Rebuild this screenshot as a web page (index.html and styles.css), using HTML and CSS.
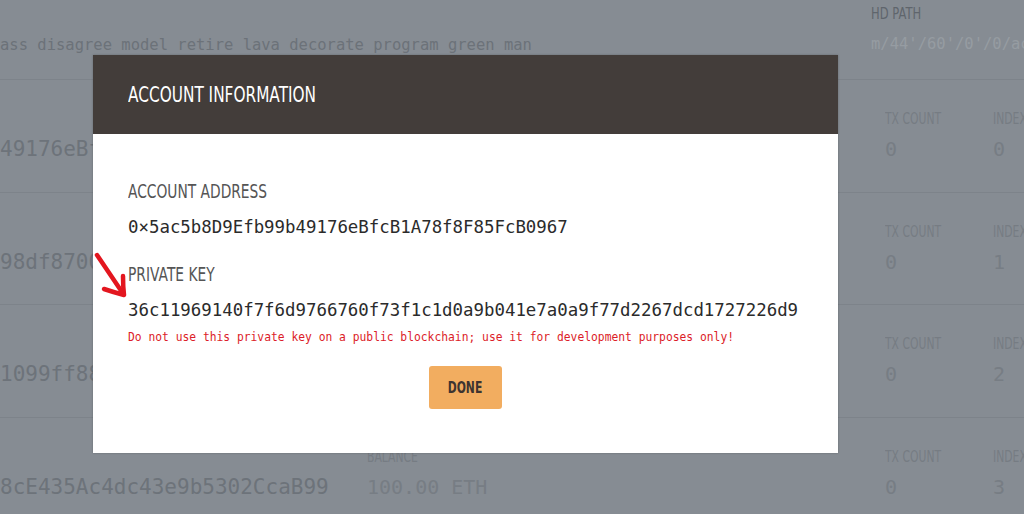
FILE: index.html
```html
<!DOCTYPE html>
<html>
<head>
<meta charset="utf-8">
<link rel="stylesheet" href="styles.css">
</head>
<body>
<div class="page">
  <header class="top">
    <div class="mnemonic">ass disagree model retire lava decorate program green man</div>
    <div class="hd">
      <div class="label"><span class="cond">HD PATH</span></div>
      <div class="hd-value">m/44'/60'/0'/0/account_index</div>
    </div>
  </header>
  <div class="row">
    <div class="addr">49176eBfcB1A78f8F85FcB0967</div>
    <div class="cell"><div class="label"><span class="cond">BALANCE</span></div><div class="value">100.00 ETH</div></div>
    <div class="cell"><div class="label"><span class="cond">TX COUNT</span></div><div class="value">0</div></div>
    <div class="cell"><div class="label"><span class="cond">INDEX</span></div><div class="value">0</div></div>
  </div>
  <div class="row">
    <div class="addr">98df8700Ba31C0a6E2d5fA91</div>
    <div class="cell"><div class="label"><span class="cond">BALANCE</span></div><div class="value">100.00 ETH</div></div>
    <div class="cell"><div class="label"><span class="cond">TX COUNT</span></div><div class="value">0</div></div>
    <div class="cell"><div class="label"><span class="cond">INDEX</span></div><div class="value">1</div></div>
  </div>
  <div class="row">
    <div class="addr">1099ff88E2aB7c4D031f6e29</div>
    <div class="cell"><div class="label"><span class="cond">BALANCE</span></div><div class="value">100.00 ETH</div></div>
    <div class="cell"><div class="label"><span class="cond">TX COUNT</span></div><div class="value">0</div></div>
    <div class="cell"><div class="label"><span class="cond">INDEX</span></div><div class="value">2</div></div>
  </div>
  <div class="row">
    <div class="addr">8cE435Ac4dc43e9b5302CcaB99</div>
    <div class="cell"><div class="label"><span class="cond">BALANCE</span></div><div class="value">100.00 ETH</div></div>
    <div class="cell"><div class="label"><span class="cond">TX COUNT</span></div><div class="value">0</div></div>
    <div class="cell"><div class="label"><span class="cond">INDEX</span></div><div class="value">3</div></div>
  </div>
</div>

<div class="modal">
  <div class="modal-head"><span class="cond">ACCOUNT INFORMATION</span></div>
  <div class="modal-body">
    <div class="m-label"><span class="cond">ACCOUNT ADDRESS</span></div>
    <div class="m-mono">0×5ac5b8D9Efb99b49176eBfcB1A78f8F85FcB0967</div>
    <div class="m-label second"><span class="cond">PRIVATE KEY</span></div>
    <div class="m-mono">36c11969140f7f6d9766760f73f1c1d0a9b041e7a0a9f77d2267dcd1727226d9</div>
    <div class="warn"><span class="cond">Do not use this private key on a public blockchain; use it for development purposes only!</span></div>
    <div class="actions"><button class="done"><span class="cond mid">DONE</span></button></div>
  </div>
</div>

<svg class="arrow" width="40" height="52" viewBox="90 250 40 52" xmlns="http://www.w3.org/2000/svg">
  <path d="M97 255 L122 292" stroke="#e3161f" stroke-width="4.5" stroke-linecap="round" fill="none"/>
  <path d="M104 289 Q113 292 124 295 Q123 286 123 276" stroke="#e3161f" stroke-width="4.5" stroke-linecap="round" stroke-linejoin="round" fill="none"/>
</svg>
</body>
</html>
```

FILE: styles.css
```css
* { box-sizing: border-box; }
html, body { margin: 0; padding: 0; }
body {
  width: 1024px;
  height: 514px;
  overflow: hidden;
  background: #868c93;
  font-family: "DejaVu Sans", Roboto, sans-serif;
}
.cond {
  display: inline-block;
  transform: scaleX(0.72);
  transform-origin: left center;
  white-space: nowrap;
}
.cond.mid { transform-origin: center center; }
.page { width: 1024px; }
.top {
  height: 80px;
  display: grid;
  grid-template-columns: 871px 1fr;
  border-bottom: 1px solid #7d838a;
}
.mnemonic {
  font-family: "DejaVu Sans Mono", monospace;
  font-size: 15.5px;
  color: #6c7279;
  padding-top: 36px;
  white-space: nowrap;
  overflow: hidden;
}
.hd { padding-top: 4px; white-space: nowrap; overflow: hidden; }
.hd .label { font-size: 16px; color: #5f656c; }
.hd-value {
  font-family: "DejaVu Sans Mono", monospace;
  font-size: 15.5px;
  color: #969ca2;
  margin-top: 12px;
}
.row {
  height: 112.5px;
  display: grid;
  grid-template-columns: 367px 518px 108px 1fr;
  border-bottom: 1px solid #7d838a;
  padding-top: 30px;
}
.addr {
  font-family: "DejaVu Sans Mono", monospace;
  font-size: 21px;
  color: #6d737a;
  padding-top: 27px;
  white-space: nowrap;
  overflow: hidden;
}
.cell { white-space: nowrap; overflow: hidden; }
.label { font-size: 15px; color: #767c83; }
.value {
  font-family: "DejaVu Sans Mono", monospace;
  font-size: 20px;
  color: #777d84;
  margin-top: 9px;
}

.modal {
  position: absolute;
  left: 93px;
  top: 55px;
  width: 745px;
  height: 398px;
  background: #ffffff;
  box-shadow: 0 0 2px rgba(0,0,0,0.25);
}
.modal-head {
  height: 79px;
  background: #433d3a;
  color: #ffffff;
  font-size: 21px;
  padding: 28px 35px 0;
}
.modal-head .cond { transform: scaleX(0.73); }
.modal-body { padding: 45px 35px 0; }
.m-label {
  font-size: 20px;
  color: #555555;
}
.m-label .cond { transform: scaleX(0.69); }
.m-label.second { margin-top: 25px; }
.m-mono {
  font-family: "DejaVu Sans Mono", monospace;
  font-size: 17.4px;
  color: #2b2b2b;
  margin-top: 14px;
  white-space: nowrap;
}
.warn {
  font-family: "DejaVu Sans Mono", monospace;
  font-size: 13px;
  color: #dc1c28;
  margin-top: 9px;
  white-space: nowrap;
}
.warn .cond { transform: scaleX(0.87); }
.actions { display: flex; justify-content: center; margin-top: 22px; }
.done {
  width: 73px;
  height: 43px;
  border: none;
  border-radius: 3px;
  background: #f2ad60;
  color: #3d3430;
  font-family: "DejaVu Sans", Roboto, sans-serif;
  font-size: 15px;
  font-weight: bold;
  padding: 0;
}
.arrow { position: absolute; left: 90px; top: 250px; }
```
